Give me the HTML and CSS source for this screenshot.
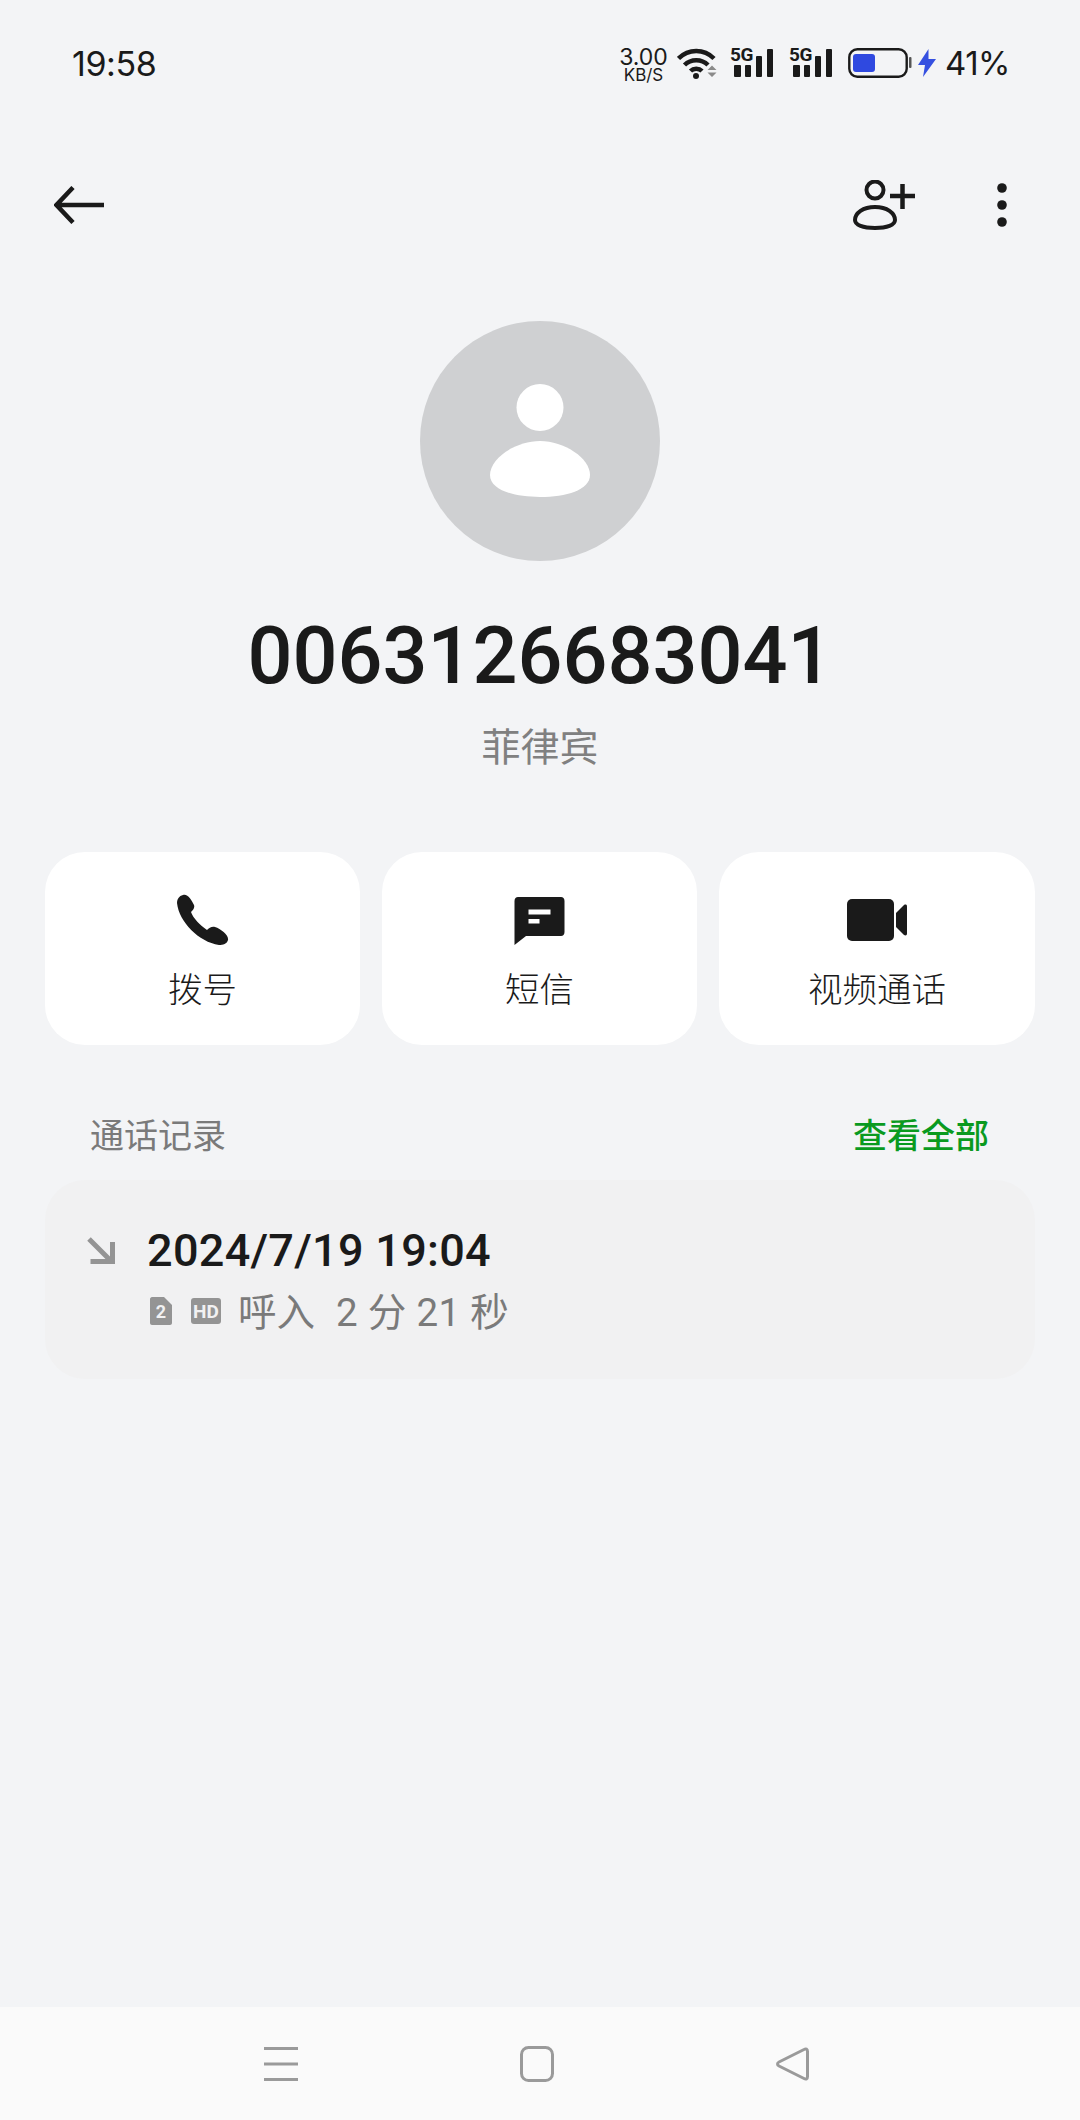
FILE: index.html
```html
<!DOCTYPE html>
<html lang="zh-CN">
<head>
    <meta charset="UTF-8">
    <meta name="viewport" content="width=device-width, initial-scale=1.0">
    <title>通话详情</title>
    <link rel="stylesheet" href="styles.css">
</head>
<body>
    <div class="screen">
        <div class="status-bar">
            <span class="clock">19:58</span>
            <div class="status-icons">
                <div class="speed"><span class="speed-num">3.00</span><span class="speed-unit">KB/S</span></div>
                <svg class="ic-wifi" width="41" height="32" viewBox="0 0 41 32">
                    <path d="M1.5 11.5C11.5 1.5 27 1.5 37 11.5" class="wave"/>
                    <path d="M7.5 18C14 11.5 24.500 11.500 31 18" class="wave"/>
                    <path d="M13.500 24C16.500 21 22 21 25 24" class="wave"/>
                    <circle cx="19" cy="29" r="3" fill="#1a1a1a"/>
                    <path d="M35 18.500L39.500 23H30.500ZM30.500 25.500H39.500L35 30Z" fill="#8a8a8a"/>
                </svg>
                <svg class="ic-signal" width="44" height="44" viewBox="0 -6 44 44">
                    <text x="0" y="14" class="sig-text">5G</text>
                    <rect x="4" y="18" width="7" height="12" rx="1" fill="#1a1a1a"/>
                    <rect x="15" y="18" width="6" height="12" rx="1" fill="#1a1a1a"/>
                    <rect x="26" y="9" width="6" height="21" rx="1" fill="#1a1a1a"/>
                    <rect x="37" y="2" width="6" height="28" rx="1" fill="#1a1a1a"/>
                </svg>
                <svg class="ic-signal" width="44" height="44" viewBox="0 -6 44 44">
                    <text x="0" y="14" class="sig-text">5G</text>
                    <rect x="4" y="18" width="7" height="12" rx="1" fill="#1a1a1a"/>
                    <rect x="15" y="18" width="6" height="12" rx="1" fill="#1a1a1a"/>
                    <rect x="26" y="9" width="6" height="21" rx="1" fill="#1a1a1a"/>
                    <rect x="37" y="2" width="6" height="28" rx="1" fill="#1a1a1a"/>
                </svg>
                <svg class="ic-battery" width="64" height="30" viewBox="0 0 64 30">
                    <rect x="1.300" y="1.300" width="57.400" height="27.400" rx="8" fill="none" stroke="#1a1a1a" stroke-width="2.400"/>
                    <rect x="5" y="6" width="22" height="18" rx="3" fill="#2f49e0"/>
                    <rect x="61" y="9" width="2.500" height="11" rx="1" fill="#555"/>
                </svg>
                <svg class="ic-bolt" width="18" height="28" viewBox="0 0 18 28">
                    <path d="M10.500 0L0 16H7L5 28L18 10H10.500Z" fill="#3550e0"/>
                </svg>
                <span class="battery-pct">41%</span>
            </div>
        </div>

        <div class="top-bar">
            <svg width="50" height="38" viewBox="0 0 50 38">
                <path d="M50 19H3M19 1.500L2.500 19L19 36.500" fill="none" stroke="#1a1a1a" stroke-width="4.500"/>
            </svg>
            <div class="top-actions">
                <svg width="62" height="50" viewBox="0 0 62 50">
                    <circle cx="22" cy="10" r="8.500" fill="none" stroke="#1a1a1a" stroke-width="4"/>
                    <path d="M22 27C10 27 2 33 2 40C2 45 10 48 22 48C34 48 42 45 42 40C42 33 34 27 22 27Z" fill="none" stroke="#1a1a1a" stroke-width="4"/>
                    <path d="M37 16H62M49.500 4V29" fill="none" stroke="#1a1a1a" stroke-width="4.500"/>
                </svg>
                <svg width="10" height="44" viewBox="0 0 10 44">
                    <circle cx="5" cy="5" r="4.800" fill="#1a1a1a"/>
                    <circle cx="5" cy="22" r="4.800" fill="#1a1a1a"/>
                    <circle cx="5" cy="39" r="4.800" fill="#1a1a1a"/>
                </svg>
            </div>
        </div>

        <div class="profile">
            <div class="avatar">
                <svg width="100" height="114" viewBox="0 0 100 114">
                    <circle cx="50" cy="23.500" r="23.500" fill="#fff"/>
                    <path d="M50 57C26 57 0 74 0 91C0 106 24 113 50 113C76 113 100 106 100 91C100 74 74 57 50 57Z" fill="#fff"/>
                </svg>
            </div>
            <div class="number">0063126683041</div>
            <div class="region">菲律宾</div>
        </div>

        <div class="actions">
            <div class="action-card">
                <svg width="52" height="52" viewBox="0 0 52 52">
                    <path d="M6 1C10 -1 15 6 17 11C18 14 16 16 14 18C16 24 23 31 30 36C32 34 35 32 38 33C44 35 52 41 51 46C50 50 46 51 42 51C22 48 2 28 0 9C0 5 2 2 6 1Z" fill="#1a1a1a"/>
                </svg>
                <span class="action-label">拨号</span>
            </div>
            <div class="action-card">
                <svg width="52" height="52" viewBox="1 0 52 52">
                    <path d="M5 3H48C50 3 51.500 4.500 51.500 7V38C51.500 40.500 50 42 48 42H13L1.500 51V7C1.500 4.500 3 3 5 3Z" fill="#1a1a1a"/>
                    <rect x="15.500" y="15.500" width="22" height="5" fill="#fff"/>
                    <rect x="15.500" y="25" width="11" height="4.500" fill="#fff"/>
                </svg>
                <span class="action-label">短信</span>
            </div>
            <div class="action-card">
                <svg width="60" height="52" viewBox="0 0 60 52">
                    <rect x="0" y="5" width="47" height="42" rx="5" fill="#1a1a1a"/>
                    <path d="M49 19L57 11C58.500 10 60 10.500 60 12.500V39.500C60 41.500 58.500 42 57 41L49 33Z" fill="#1a1a1a"/>
                </svg>
                <span class="action-label">视频通话</span>
            </div>
        </div>

        <div class="log-header">
            <span class="log-title">通话记录</span>
            <span class="log-all">查看全部</span>
        </div>

        <div class="log-card">
            <svg class="log-arrow" width="28" height="28" viewBox="0 0 28 28">
                <path d="M2 2L24 24M3.500 24.500H25.500V5" fill="none" stroke="#949494" stroke-width="5"/>
            </svg>
            <div class="log-body">
                <div class="log-date">2024/7/19 19:04</div>
                <div class="log-detail">
                    <svg class="sim-icon" width="22" height="28" viewBox="0 0 22 28">
                        <path d="M2 0H14L22 8V26C22 27 21 28 20 28H2C1 28 0 27 0 26V2C0 1 1 0 2 0Z" fill="#949494"/>
                        <text x="11" y="21" class="sim-text">2</text>
                    </svg>
                    <svg class="hd-icon" width="30" height="26" viewBox="0 0 30 26">
                        <rect width="30" height="26" rx="3" fill="#949494"/>
                        <text x="15" y="19.500" class="hd-text">HD</text>
                    </svg>
                    <span class="log-kind">呼入</span>
                    <span class="log-length">2 分 21 秒</span>
                </div>
            </div>
        </div>

        <div class="nav-bar">
            <svg width="34" height="34" viewBox="0 0 34 34">
                <path d="M0 1.500H34M0 17H34M0 32.500H34" fill="none" stroke="#9a9a9a" stroke-width="3"/>
            </svg>
            <svg width="34" height="36" viewBox="0 0 34 36">
                <rect x="1.500" y="1.500" width="31" height="33" rx="7" fill="none" stroke="#9a9a9a" stroke-width="3"/>
            </svg>
            <svg width="33" height="34" viewBox="0 0 33 34">
                <path d="M28 2.500C30 1.300 31.500 2 31.500 4.500V29.500C31.500 32 30 32.700 28 31.500L3 19C1 18 1 16 3 15Z" fill="none" stroke="#9a9a9a" stroke-width="3" stroke-linejoin="round"/>
            </svg>
        </div>
    </div>
</body>
</html>
```

FILE: styles.css
```css
* {
    box-sizing: border-box;
}
body {
    margin: 0;
    background: #f3f4f6;
    color: #1a1a1a;
    font-family: Roboto, "Noto Sans CJK SC", sans-serif;
}
svg {
    display: block;
    flex: none;
}
.screen {
    display: flex;
    flex-direction: column;
    height: 2120px;
}

.status-bar {
    display: flex;
    justify-content: space-between;
    align-items: center;
    height: 126px;
    padding: 0 70px 0 72px;
}
.clock {
    font-family: Inter, sans-serif;
    font-size: 34px;
    letter-spacing: -0.4px;
}
.battery-pct {
    font-family: Inter, sans-serif;
    font-size: 33px;
    letter-spacing: -0.5px;
}
.status-icons {
    display: flex;
    align-items: center;
}
.speed {
    display: flex;
    flex-direction: column;
    align-items: center;
    width: 47px;
    margin-top: 3px;
    font-family: Inter, sans-serif;
}
.speed-num {
    font-size: 23px;
    line-height: 20px;
}
.speed-unit {
    font-size: 17px;
    line-height: 16px;
}
.ic-wifi {
    margin-left: 10px;
}
.wave {
    fill: none;
    stroke: #1a1a1a;
    stroke-width: 4.500;
}
.ic-signal {
    margin-left: 12px;
}
.ic-signal + .ic-signal {
    margin-left: 15px;
}
.sig-text {
    font-family: Roboto, sans-serif;
    font-size: 19px;
    font-weight: 700;
    letter-spacing: -0.5px;
    fill: #1a1a1a;
}
.ic-battery {
    margin-left: 15px;
}
.ic-bolt {
    margin-left: 6px;
}
.battery-pct {
    margin-left: 9px;
}

.top-bar {
    display: flex;
    justify-content: space-between;
    align-items: center;
    height: 158px;
    padding: 0 73px 0 54px;
}
.top-actions {
    display: flex;
    align-items: center;
    gap: 82px;
}

.profile {
    display: flex;
    flex-direction: column;
    align-items: center;
    padding-top: 37px;
}
.avatar {
    display: flex;
    justify-content: center;
    align-items: center;
    width: 240px;
    height: 240px;
    margin-right: 1px;
    border-radius: 50%;
    background: #cfd0d2;
}
.number {
    margin-top: 49px;
    font-size: 79.200px;
    font-weight: 500;
    line-height: 92px;
}
.region {
    margin-top: 21px;
    color: #808080;
    font-size: 39px;
    line-height: 50px;
}

.actions {
    display: grid;
    grid-template-columns: 315px 315px 316px;
    gap: 22px;
    margin-top: 79px;
    padding: 0 45px;
}
.action-card {
    display: flex;
    flex-direction: column;
    align-items: center;
    height: 193px;
    padding-top: 42px;
    border-radius: 40px;
    background: #fff;
}
.action-label {
    margin-top: 21px;
    font-size: 34.500px;
    font-weight: 300;
    line-height: 46px;
}

.log-header {
    display: flex;
    justify-content: space-between;
    margin-top: 66px;
    padding: 0 91px 0 90px;
    font-size: 34px;
    line-height: 50px;
}
.log-title {
    color: #7a7a7a;
}
.log-all {
    color: #0a9a1f;
    font-weight: 500;
}

.log-card {
    display: flex;
    height: 199px;
    margin: 19px 45px 0;
    padding: 44px 0 0 42px;
    border-radius: 40px;
    background: #f1f1f2;
}
.log-arrow {
    margin-top: 13px;
}
.log-body {
    margin-left: 32px;
}
.log-date {
    font-size: 45px;
    font-weight: 500;
    letter-spacing: 0.300px;
    line-height: 54px;
}
.log-detail {
    display: flex;
    align-items: center;
    height: 50px;
    margin-top: 8px;
    padding-left: 3px;
    color: #7a7a7a;
    font-size: 38.500px;
}
.sim-text,
.hd-text {
    fill: #f1f1f2;
    font-family: Roboto, sans-serif;
    font-weight: 700;
    text-anchor: middle;
}
.sim-text {
    font-size: 18px;
}
.hd-text {
    font-size: 19px;
}
.hd-icon {
    margin-left: 19px;
}
.log-kind {
    margin: -4px 0 0 17px;
}
.log-length {
    margin: -4px 0 0 21px;
    letter-spacing: 0.300px;
}

.nav-bar {
    display: flex;
    justify-content: center;
    align-items: center;
    gap: 222px;
    height: 113px;
    margin-top: auto;
    padding-right: 7px;
    background: #fafafa;
}
```
